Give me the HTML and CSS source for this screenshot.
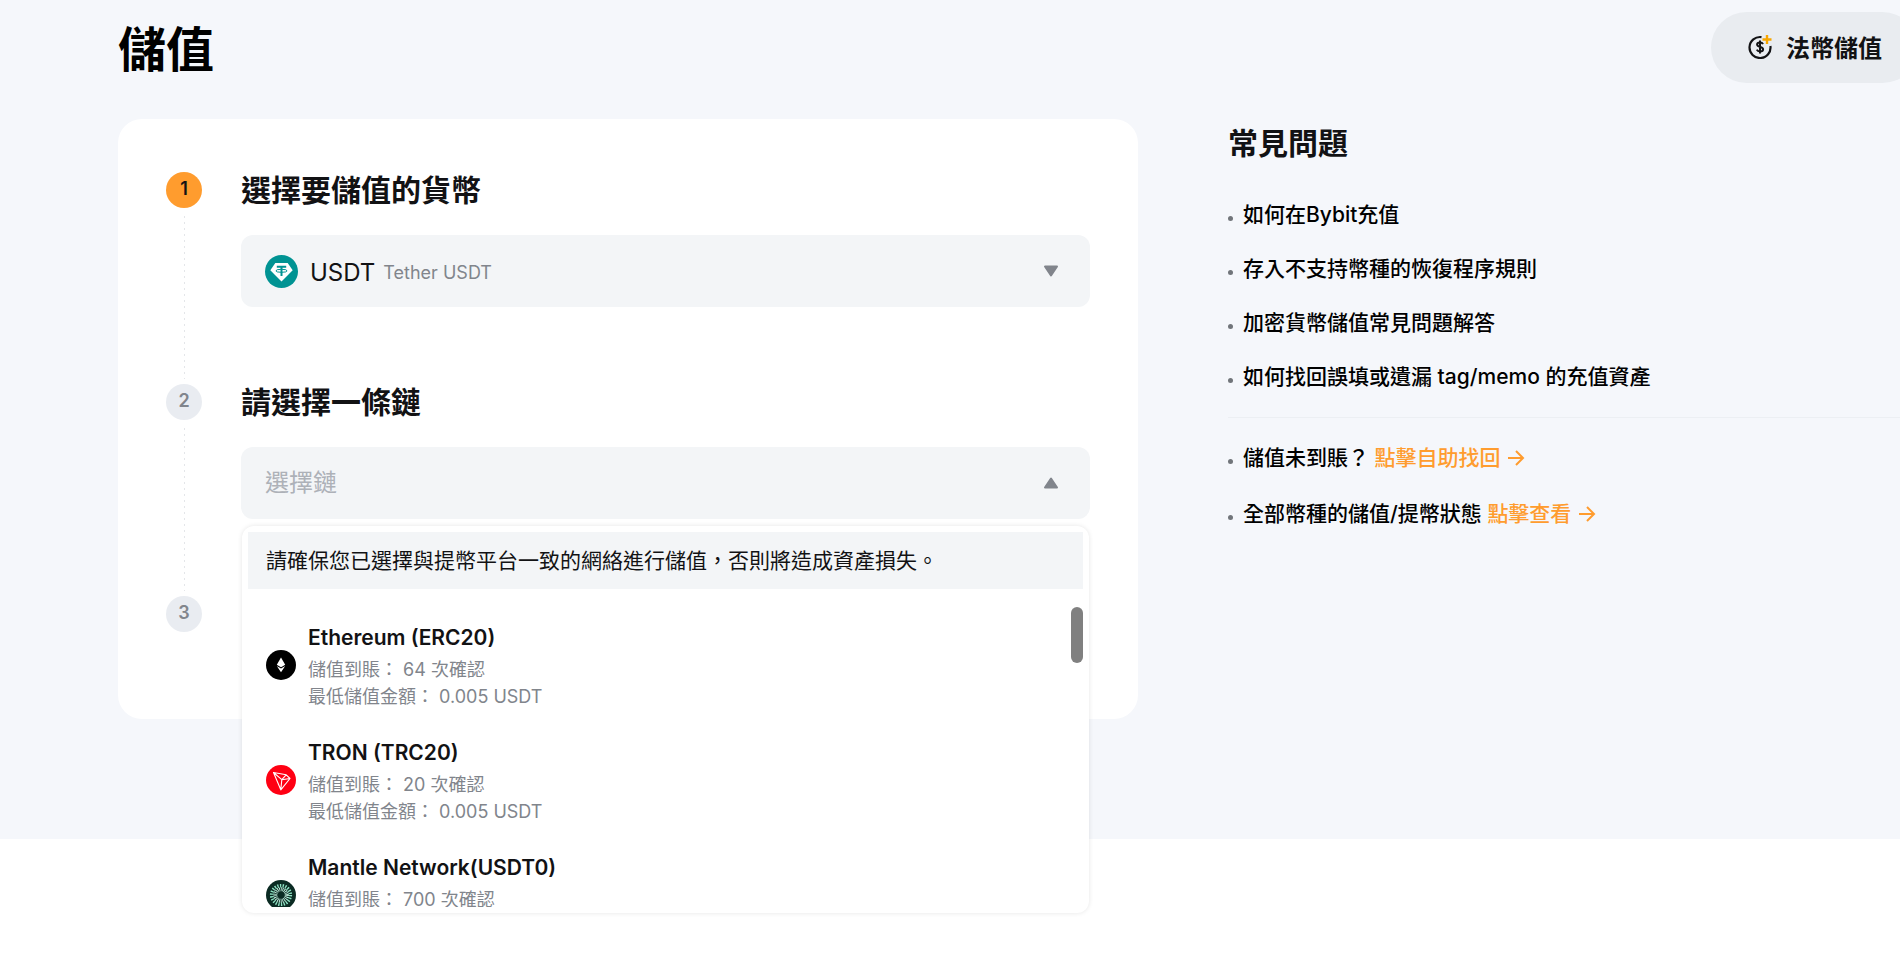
FILE: index.html
```html
<!DOCTYPE html>
<html lang="zh-Hant">
<head>
  <meta charset="UTF-8">
  <meta name="viewport" content="width=device-width, initial-scale=1">
  <title>儲值</title>
  <link rel="stylesheet" href="styles.css">
</head>
<body>

<div class="page">
  <header class="header">
    <h1 class="title">儲值</h1>
    <button class="fiat" type="button">
      <svg class="fiat-icon" viewBox="0 0 24 24" fill="none" stroke="#121214" stroke-width="2.2">
        <path d="M13.500 2.100A10.500 10.500 0 1 0 22.400 11"/>
        <path d="M15 9.200c-.5-1.100-1.600-1.700-3-1.700-1.700 0-2.900.8-2.900 2.100 0 3 6 1.600 6 4.700 0 1.300-1.300 2.200-3.100 2.200-1.500 0-2.700-.7-3.200-1.800M12 5.500v13" stroke-width="2"/>
        <path d="M19 0v9M14.500 4.500h9" stroke="#f7a600" stroke-width="2.4"/>
      </svg>
      法幣儲值
    </button>
  </header>

  <main class="main">
    <section class="card">

      <div class="step">
        <div class="rail">
          <span class="num active">1</span>
          <span class="line"></span>
        </div>
        <div class="content">
          <h2><label for="coin">選擇要儲值的貨幣</label></h2>
          <div class="field">
            <svg class="coin-icon" viewBox="0 0 33 33">
              <circle cx="16.500" cy="16.500" r="16.500" fill="#009393"/>
              <path d="M10.300 8h12.400l5 7.300-11.200 11.200L5.300 15.300z" fill="#fff"/>
              <path d="M11.800 11.700h9.400M16.500 11.700v9.300" fill="none" stroke="#009393" stroke-width="2"/>
              <ellipse cx="16.500" cy="15.800" rx="5.600" ry="1.500" fill="none" stroke="#009393" stroke-width="1"/>
            </svg>
            <select class="select" id="coin">
              <option>USDT</option>
            </select>
            <span class="fullname">Tether USDT</span>
            <svg class="arrow" viewBox="0 0 16 12"><path d="M2 1.500h12L8 10.500z"/></svg>
          </div>
        </div>
      </div>

      <div class="step">
        <div class="rail">
          <span class="num">2</span>
          <span class="line"></span>
        </div>
        <div class="content">
          <h2><label for="chain">請選擇一條鏈</label></h2>
          <div class="field">
            <select class="select placeholder" id="chain">
              <option>選擇鏈</option>
            </select>
            <svg class="arrow" viewBox="0 0 16 12"><path d="M2 10.500h12L8 1.500z"/></svg>

            <!-- chain menu -->
            <div class="menu">
              <p class="notice">請確保您已選擇與提幣平台一致的網絡進行儲值，否則將造成資產損失。</p>
              <ul class="chains" role="listbox" aria-label="選擇鏈">
                <li class="chain" role="option">
                  <svg class="chain-icon" viewBox="0 0 30 30">
                    <circle cx="15" cy="15" r="15" fill="#000"/>
                    <path d="M15 7.500l4.200 7.300L15 17.200l-4.200-2.400z" fill="#fff"/>
                    <path d="M10.800 16L15 18.500l4.200-2.500L15 22.300z" fill="#fff"/>
                  </svg>
                  <div>
                    <h3>Ethereum (ERC20)</h3>
                    <p>儲值到賬： 64 次確認</p>
                    <p>最低儲值金額： 0.005 USDT</p>
                  </div>
                </li>
                <li class="chain" role="option">
                  <svg class="chain-icon" viewBox="0 0 30 30">
                    <circle cx="15" cy="15" r="15" fill="#ff0013"/>
                    <path d="M7.500 7.500l12.700 2.300 3.800 3.700-9.200 11.300zM7.500 7.500l8.300 7.200L24 13.500M15.800 14.700l4.400-4.900M15.800 14.700l-1 10.100" fill="none" stroke="#fff" stroke-width="1.100" stroke-linejoin="round"/>
                  </svg>
                  <div>
                    <h3>TRON (TRC20)</h3>
                    <p>儲值到賬： 20 次確認</p>
                    <p>最低儲值金額： 0.005 USDT</p>
                  </div>
                </li>
                <li class="chain" role="option">
                  <svg class="chain-icon" viewBox="0 0 30 30">
                    <circle cx="15" cy="15" r="15" fill="#0b2b23"/>
                    <circle cx="15" cy="15" r="9.300" fill="none" stroke="#8fe3c4" stroke-width="3.600" stroke-dasharray="1.320 1.335"/>
                    <circle cx="15" cy="15" r="5.700" fill="none" stroke="#c9f5e4" stroke-width="4" stroke-dasharray=".8 .828"/>
                  </svg>
                  <div>
                    <h3>Mantle Network(USDT0)</h3>
                    <p>儲值到賬： 700 次確認</p>
                  </div>
                </li>
              </ul>
              <span class="thumb"></span>
            </div>
          </div>
        </div>
      </div>

      <div class="step">
        <div class="rail">
          <span class="num">3</span>
        </div>
      </div>

    </section>

    <aside class="faq">
      <h2>常見問題</h2>
      <ul>
        <li><a href="#">如何在Bybit充值</a></li>
        <li><a href="#">存入不支持幣種的恢復程序規則</a></li>
        <li><a href="#">加密貨幣儲值常見問題解答</a></li>
        <li><a href="#">如何找回誤填或遺漏 tag/memo 的充值資產</a></li>
      </ul>
      <ul class="help">
        <li>儲值未到賬？ <a class="go" href="#">點擊自助找回 <svg viewBox="0 0 18 18"><path d="M1 9h15M9 2l7 7-7 7"/></svg></a></li>
        <li>全部幣種的儲值/提幣狀態 <a class="go" href="#">點擊查看 <svg viewBox="0 0 18 18"><path d="M1 9h15M9 2l7 7-7 7"/></svg></a></li>
      </ul>
    </aside>
  </main>
</div>

</body>
</html>
```

FILE: styles.css
```css
*{
	box-sizing: border-box;
}
html{
	overflow-x: hidden;
}
body{
	margin: 0;
	min-height: 100vh;
	font-family: Inter, "Noto Sans CJK TC", sans-serif;
	font-size: 21px;
	color: #121214;
	background: #fff;
}
h1, h2, h3, p, ul{
	margin: 0;
	padding: 0;
}
li{
	list-style: none;
}
a{
	color: inherit;
	text-decoration: none;
}

.page{
	background: #f5f7fb;
	padding: 12px 0 120px 118px;
}

/* header */
.header{
	display: flex;
	justify-content: space-between;
	align-items: center;
	margin-bottom: 36px;
}
.title{
	padding-top: 4px;
	font-size: 48px;
	line-height: 67px;
	font-weight: 700;
	color: #000;
}
.fiat{
	display: flex;
	align-items: center;
	gap: 14px;
	height: 71px;
	margin-right: -18px;
	padding: 0 36px 2px 37px;
	border: 0;
	border-radius: 36px;
	background: #e9ecf0;
	color: #121214;
	font-family: inherit;
	font-size: 24px;
	font-weight: 600;
	white-space: nowrap;
}
.fiat-icon{
	width: 24px;
	height: 24px;
}

/* two columns */
.main{
	display: grid;
	grid-template-columns: minmax(0, 1020px) minmax(0, 1fr);
	gap: 90px;
	align-items: start;
}

/* steps card */
.card{
	background: #fff;
	border-radius: 24px;
	padding: 48px;
	padding-bottom: 87px;
}
.step{
	display: flex;
	gap: 39px;
}
.rail{
	display: flex;
	flex-direction: column;
	align-items: center;
	padding-top: 5px;
}
.num{
	width: 36px;
	height: 36px;
	border-radius: 50%;
	background: #e9ecf1;
	color: #81858c;
	font-size: 18px;
	line-height: 34px;
	font-weight: 600;
	text-align: center;
}
.num.active{
	background: #ff9c2e;
	color: #121214;
}
.line{
	flex: 1;
	width: 1px;
	margin-top: 8px;
	background: repeating-linear-gradient(#e4e6e9 0 2px, transparent 2px 6px);
}
.content{
	flex: 1;
	padding-bottom: 72px;
}
.content h2{
	font-size: 30px;
	line-height: 46px;
	font-weight: 700;
	margin-bottom: 22px;
}
.field{
	position: relative;
	display: flex;
	align-items: center;
	height: 72px;
	padding: 0 31px 0 24px;
	border-radius: 12px;
	background: #f3f5f7;
}
.select{
	appearance: none;
	field-sizing: content;
	padding: 3px 0 0;
	border: 0;
	outline: 0;
	background: none;
	color: #121214;
	font-family: inherit;
	font-size: 24px;
	line-height: 36px;
}
.select.placeholder{
	padding: 0;
	color: #adb1b8;
}
.coin-icon{
	width: 33px;
	height: 33px;
	margin-right: 12px;
}
.fullname{
	margin-left: 8px;
	padding-top: 3px;
	font-size: 18px;
	color: #81858c;
}
.arrow{
	width: 16px;
	height: 12px;
	margin-left: auto;
	fill: #81858c;
	stroke: #81858c;
	stroke-width: 2;
	stroke-linejoin: round;
}

/* chain menu */
.menu{
	position: absolute;
	z-index: 2;
	top: calc(100% + 7px);
	left: 1px;
	right: 1px;
	padding: 6px;
	border-radius: 12px;
	background: #fff;
	box-shadow: 0 0 5px rgba(0, 0, 0, .1);
}
.notice{
	padding: 0 18px;
	background: #f3f5f7;
	line-height: 57px;
}
.chains{
	height: 318px;
	padding-top: 18px;
	overflow: hidden;
}
.chain{
	display: flex;
	align-items: center;
	gap: 12px;
	padding: 12px 18px;
}
.chain > div{
	min-height: 91px;
}
.chain-icon{
	width: 30px;
	height: 30px;
}
.chain h3{
	font-size: 21px;
	line-height: 37px;
	font-weight: 600;
}
.chain p{
	font-size: 18px;
	line-height: 27px;
	color: #81858c;
}
.thumb{
	position: absolute;
	top: 81px;
	right: 6px;
	width: 12px;
	height: 56px;
	border-radius: 6px;
	background: #808080;
}

/* faq */
.faq h2{
	font-size: 30px;
	line-height: 48px;
	font-weight: 600;
	margin-bottom: 21px;
}
.faq li{
	display: flex;
	align-items: center;
	line-height: 54px;
	font-weight: 500;
	color: #000;
	white-space: pre;
}
.faq li::before{
	content: "";
	width: 5px;
	height: 5px;
	margin: 7px 10px 0 0;
	border-radius: 50%;
	background: #71757a;
}
.faq .help{
	margin-top: 13px;
	padding-top: 12px;
	border-top: 1px solid #eceff3;
}
.faq .help li{
	line-height: 56px;
}
.go{
	color: #ff9c2e;
}
.go svg{
	width: 18px;
	height: 18px;
	margin-left: 1px;
	vertical-align: -2px;
	fill: none;
	stroke: #ff9c2e;
	stroke-width: 2;
}
```
